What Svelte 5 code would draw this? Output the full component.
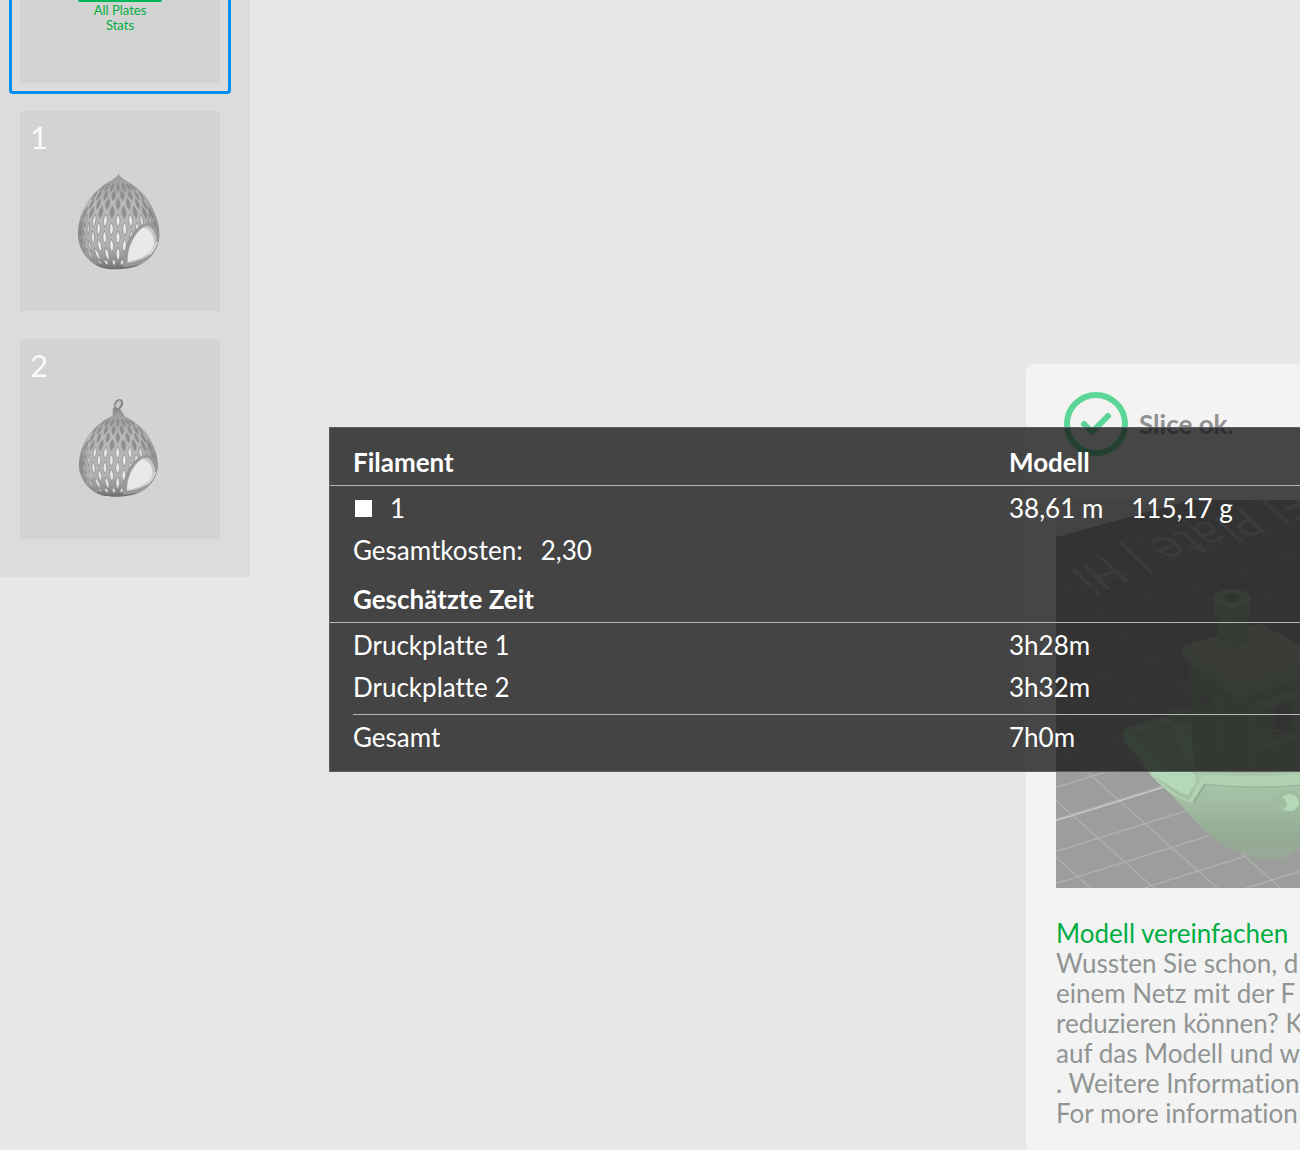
<script>
  const plates = [
    { id: 1, hook: false },
    { id: 2, hook: true },
  ];

  const times = [
    { name: 'Druckplatte 1', time: '3h28m' },
    { name: 'Druckplatte 2', time: '3h32m' },
  ];

  const hint = [
    'Wussten Sie schon, d',
    'einem Netz mit der F',
    'reduzieren können? K',
    'auf das Modell und w',
    '. Weitere Information',
    'For more information',
  ];

  // ── Lattice shell ─────────────────────────────────────────────────────
  const SHELL = 'M175 42C184 56 201 62 220 75C248 95 266 118 279 147C292 175 299 200 298 228C296 262 278 291 242 313C216 330 140 334 112 318C78 300 56 266 54 228C53 190 65 150 86 120C102 97 122 80 145 66C160 58 168 54 175 42Z';

  // half width of the shell at a given height
  const PROFILE = [
    [42, 0], [60, 24], [80, 50], [100, 71], [130, 92], [165, 109],
    [200, 118], [230, 120], [260, 112], [285, 97], [305, 76], [325, 40],
  ];

  function radius(y) {
    for (let i = 1; i < PROFILE.length; i++) {
      const [y0, r0] = PROFILE[i - 1];
      const [y1, r1] = PROFILE[i];
      if (y <= y1) return r0 + ((r1 - r0) * (y - y0)) / (y1 - y0);
    }
    return 0;
  }

  function buildHoles() {
    const list = [];
    for (let row = 0; row < 10; row++) {
      const y = 82 + row * 25;
      const r = radius(y);
      const len = row > 8 ? 9 : Math.min(20, 13 + row * 1.6);
      for (let k = -4; k <= 4; k++) {
        const theta = k * 0.34 + (row % 2 ? 0.17 : 0);
        if (Math.abs(theta) > 1.3) continue;
        const x = 174 + r * Math.sin(theta);
        const slope = ((radius(y + 8) - radius(y - 8)) / 16) * Math.sin(theta);
        const rx = Math.max(2, Math.min(7, 2 + r * 0.045) * Math.cos(theta));
        const open = y > 170 && theta > -0.75;
        list.push({
          x, y, rx, ry: len,
          angle: (-Math.atan(slope) * 180) / Math.PI,
          fill: open ? '#e8e8e8' : y > 170 ? '#d2d2d2' : '#909090',
        });
      }
    }
    return list;
  }

  const holes = buildHoles();

  const gridA = Array.from({ length: 17 }, (_, i) => -329 + i * 96);
  const gridB = Array.from({ length: 12 }, (_, i) => -1229 + i * 190);
</script>

<div class="page">
  <nav class="plates" aria-label="Plates">
    <button class="tile all selected">
      <span class="pill"></span>
      <span>All Plates<br />Stats</span>
    </button>
    {#each plates as plate (plate.id)}
      <button class="tile">
        <span class="number">{plate.id}</span>
        <svg class="thumb" viewBox="0 0 600 600" aria-hidden="true">
          <defs>
            <linearGradient id="shell-{plate.id}" x1="0" y1="0" x2="0" y2="1">
              <stop offset="0" stop-color="#989898" />
              <stop offset="0.3" stop-color="#b8b8b8" />
              <stop offset="0.75" stop-color="#b2b2b2" />
              <stop offset="0.9" stop-color="#929292" />
              <stop offset="1" stop-color="#6c6c6c" />
            </linearGradient>
            <linearGradient id="side-{plate.id}" x1="0" y1="0" x2="1" y2="0">
              <stop offset="0" stop-color="#555" stop-opacity="0.5" />
              <stop offset="0.12" stop-color="#777" stop-opacity="0" />
              <stop offset="0.75" stop-color="#777" stop-opacity="0" />
              <stop offset="1" stop-color="#555" stop-opacity="0.45" />
            </linearGradient>
            <clipPath id="clip-{plate.id}"><path d={SHELL} /></clipPath>
          </defs>
          <g transform={plate.hook ? 'translate(125 177) scale(0.967 0.903)' : 'translate(120 147)'}>
            {#if plate.hook}
              <path d="M158 62L159 34L172 30L186 42L196 62Z" fill="#929292" />
              <ellipse cx="176" cy="22" rx="10" ry="16" transform="rotate(24 176 22)" fill="#c6c6c6" stroke="#858585" stroke-width="7" />
              <path d="M164 30Q168 12 182 8" fill="none" stroke="#b8b8b8" stroke-width="3" />
            {/if}
            <path d={SHELL} fill="url(#shell-{plate.id})" />
            <g clip-path="url(#clip-{plate.id})">
              {#each holes as h}
                <path
                  d="M0 {-h.ry}Q{h.rx * 1.8} 0 0 {h.ry}Q{-h.rx * 1.8} 0 0 {-h.ry}Z"
                  transform="translate({h.x} {h.y}) rotate({h.angle})"
                  fill={h.fill}
                  stroke="#888888"
                  stroke-width="2"
                />
              {/each}
            </g>
            <path d={SHELL} fill="url(#side-{plate.id})" />
            <!-- entrance -->
            <path d="M190 322C188 270 204 226 236 200C262 182 288 190 297 222C298 262 280 292 242 313Z" fill="#989898" />
            <path d="M202 309C200 268 218 225 246 203C262 193 278 198 285 222C294 240 290 262 274 282C252 298 226 306 202 309Z" fill="#c6c6c6" />
            <path d="M204 305C202 268 220 226 248 204C268 204 280 222 282 248C280 268 266 282 247 292C230 299 218 303 204 305Z" fill="#e9e9e9" />
            <path d="M268 284Q284 268 292 246" fill="none" stroke="#dedede" stroke-width="4" />
          </g>
        </svg>
      </button>
    {/each}
  </nav>

  <aside class="notice">
    <header>
      <svg class="ok" viewBox="0 0 64 64" aria-hidden="true">
        <circle cx="32" cy="32" r="29" />
        <path d="M20 32l8 8L44 24" />
      </svg>
      <strong>Slice ok.</strong>
    </header>

    <svg class="scene" viewBox="0 0 244 388" preserveAspectRatio="xMinYMin slice" aria-hidden="true">
      <defs>
        <linearGradient id="hull" x1="0" y1="0" x2="0" y2="1">
          <stop offset="0" stop-color="#abccae" />
          <stop offset="0.45" stop-color="#a9c8ab" />
          <stop offset="0.85" stop-color="#94aa94" />
          <stop offset="1" stop-color="#98a998" />
        </linearGradient>
      </defs>
      <rect width="100%" height="100%" fill="#e4e4e4" />
      <path d="M0 37L134 0H900V388H0Z" fill="#9c9e9c" />
      <g transform="translate(-36 50) scale(0.3333)">
        <g stroke="#b0b0b0" stroke-width="4">
          {#each gridA as y}
            <line x1="100" y1={y + 180} x2="900" y2={y - 70} />
          {/each}
          {#each gridB as x}
            <line x1={x} y1="-100" x2={x + 1280} y2="1040" />
          {/each}
        </g>
        <path d="M108 812L430 712" stroke="#cbcbcb" stroke-width="4" />
      </g>
      <path d="M0 0H134L0 37Z" fill="#e4e4e4" />
      <text class="engraving" transform="translate(262 -20) rotate(160) skewX(26)">PEI Plate | Hi</text>
      <g transform="translate(-36 50) scale(0.3333)">
        <!-- hull -->
        <path d="M308 545L325 530L450 495L840 480V890Q810 925 760 928Q690 930 620 890Q560 855 510 795L390 665L315 575Z" fill="url(#hull)" />
        <path d="M308 545L440 508L520 560L530 690L505 735L480 728L390 665L315 575Z" fill="#b1d6b3" />
        <path d="M335 548L455 515L480 610L530 665V700L500 715Z" fill="#a8c5a8" />
        <path d="M385 665H515Q530 672 527 698L505 736Q455 715 385 665Z" fill="#b4d9b6" />
        <path d="M545 680Q560 672 600 676Q720 684 840 672V704Q700 716 558 702L520 757L505 755Z" fill="#b0d2b1" />
        <path d="M556 703L520 757" stroke="#8ea78f" stroke-width="5" />
        <path d="M558 704Q700 718 840 706" fill="none" stroke="#96b098" stroke-width="3" />
        <path d="M390 668Q440 730 515 757" fill="none" stroke="#b2d3b3" stroke-width="5" />
        <ellipse cx="806" cy="754" rx="35" ry="33" fill="#9ebc9f" />
        <ellipse cx="808" cy="758" rx="29" ry="26" fill="#b5d9b7" />
        <path d="M779 750Q790 735 800 760Q798 780 790 777Q778 768 779 750Z" fill="#a0bda2" />

        <!-- cabin -->
        <path d="M508 330L520 660Q680 680 840 664V370L650 430Z" fill="#a6b6a0" />
        <path d="M438 484Q475 465 512 474V520L460 514Z" fill="#aab9a6" />
        <path d="M488 290L595 255L720 220L840 285V345L660 412V446L508 335L490 318Z" fill="#bccab0" />
        <path d="M490 292L652 408L840 348V388L655 446L640 440L508 335L490 318Z" fill="#b3c2aa" />
        <path d="M544 468V445Q560 425 578 445V462Z" fill="#97a694" />
        <path d="M580 430Q612 470 612 660M660 450V668M690 465V650" fill="none" stroke="#b0c0a9" stroke-width="4" />
        <path d="M690 465L840 415V440L708 485V590L840 545V562L708 602Q685 600 690 580Z" fill="#b3c2aa" />
        <path d="M765 470L812 453V540L765 555Z" fill="#969c96" />
        <path d="M712 565Q735 530 778 545" fill="none" stroke="#b4c3aa" stroke-width="10" />

        <!-- chimney -->
        <path d="M582 145V195Q590 205 594 205V275Q640 305 684 275V205L690 195V145Z" fill="#a9bca5" />
        <path d="M620 170V286" stroke="#b0c1a9" stroke-width="22" />
        <ellipse cx="636" cy="145" rx="55" ry="28" fill="#b8cbb0" />
        <ellipse cx="636" cy="144" rx="24" ry="13" fill="#98a795" />
      </g>
    </svg>

    <h2>Modell vereinfachen</h2>
    <p>
      {#each hint as line}
        <span>{line}</span>
      {/each}
    </p>
  </aside>

  <section class="stats">
    <table>
      <thead>
        <tr><th scope="col">Filament</th><th scope="col">Modell</th></tr>
      </thead>
      <tbody>
        <tr>
          <td><span class="filament"><i class="swatch"></i>1</span></td>
          <td><span class="usage"><span>38,61 m</span><span>115,17 g</span></span></td>
        </tr>
        <tr>
          <td><span class="cost"><span>Gesamtkosten:</span><span>2,30</span></span></td>
          <td></td>
        </tr>
      </tbody>
    </table>
    <table class="times">
      <thead>
        <tr><th scope="col">Geschätzte Zeit</th><th></th></tr>
      </thead>
      <tbody>
        {#each times as t}
          <tr><td>{t.name}</td><td>{t.time}</td></tr>
        {/each}
      </tbody>
    </table>
    <hr />
    <table>
      <tbody>
        <tr><td>Gesamt</td><td>7h0m</td></tr>
      </tbody>
    </table>
  </section>
</div>

<style>
  :global(body) {
    background: #e7e7e7;
  }

  .page {
    position: relative;
    display: flex;
    justify-content: space-between;
    align-items: flex-start;
    height: 100vh;
    overflow: hidden;
    font-family: Lato, 'Noto Sans', sans-serif;
    font-size: 26px;
    font-variant-ligatures: none;
    line-height: 30px;
  }

  /* Plate list */
  .plates {
    display: flex;
    flex-direction: column;
    gap: 28px;
    padding: 0 30px 38px 20px;
    background: #dcdcdc;
    border-radius: 0 0 4px 0;
  }

  .tile {
    position: relative;
    width: 200px;
    height: 200px;
    padding: 0;
    border: 0;
    background: #d3d3d3;
    font-family: inherit;
  }

  .tile.all {
    display: flex;
    flex-direction: column;
    align-items: center;
    height: 83px;
    color: #00ae42;
    font-size: 13px;
    line-height: 15px;
  }

  .selected::after {
    content: '';
    position: absolute;
    inset: -11px;
    border: 3px solid #0090f0;
    border-radius: 4px;
  }

  .pill {
    width: 84px;
    height: 2px;
    margin-bottom: 1px;
    background: #00b857;
    border-radius: 0 0 8px 8px;
  }

  .number {
    position: absolute;
    top: 8px;
    left: 10px;
    color: #fafafa;
    font-size: 31px;
    line-height: 36px;
  }

  .thumb {
    display: block;
    width: 100%;
    height: 100%;
  }

  /* Slicing notice */
  .notice {
    box-sizing: border-box;
    width: 274px;
    min-height: 100vh;
    margin-top: 364px;
    padding: 28px 0 0 30px;
    background: #f3f3f3;
    border-radius: 8px 0 0 0;
    color: #909593;
    white-space: nowrap;
    overflow: hidden;
  }

  .notice header {
    display: flex;
    align-items: center;
    gap: 11px;
    margin: 0 0 44px 8px;
    color: #909090;
  }

  .ok {
    width: 64px;
    height: 64px;
    fill: none;
    stroke: #5cd698;
    stroke-width: 6;
    stroke-linecap: round;
    stroke-linejoin: round;
  }

  .scene {
    display: block;
    width: 100%;
    height: 388px;
    margin-bottom: 30px;
  }

  .engraving {
    fill: #c2c2c2;
    font-family: 'DejaVu Sans', sans-serif;
    font-size: 42px;
  }

  .notice h2 {
    margin: 0;
    color: #00ae42;
    font-size: inherit;
    font-weight: 400;
  }

  .notice p {
    margin: 0;
  }

  .notice p span {
    display: block;
  }

  /* Statistics overlay */
  .stats {
    position: absolute;
    top: 427px;
    left: 329px;
    right: 0;
    padding-bottom: 14px;
    background: rgba(18, 18, 18, 0.77);
    border: 1px solid #5c5c64;
    border-right: 0;
    color: #fff;
  }

  table {
    width: 100%;
    table-layout: fixed;
    border-collapse: separate;
    border-spacing: 0;
  }

  th,
  td {
    padding: 7px 0 5px 23px;
    text-align: left;
    white-space: nowrap;
  }

  th {
    padding-top: 19px;
    padding-bottom: 8px;
    border-bottom: 1px solid #b4b4b4;
    font-weight: 700;
  }

  .times th {
    padding-top: 14px;
  }

  th:first-child,
  td:first-child {
    width: 633px;
  }

  hr {
    height: 1px;
    margin: 7px 0 0 23px;
    border: 0;
    background: #b4b4b4;
  }

  .filament,
  .usage,
  .cost {
    display: flex;
    align-items: center;
  }

  .filament {
    gap: 18px;
  }

  .swatch {
    width: 17px;
    height: 17px;
    margin-left: 2px;
    background: #fff;
  }

  .usage {
    gap: 28px;
  }

  .cost {
    gap: 18px;
  }
</style>
